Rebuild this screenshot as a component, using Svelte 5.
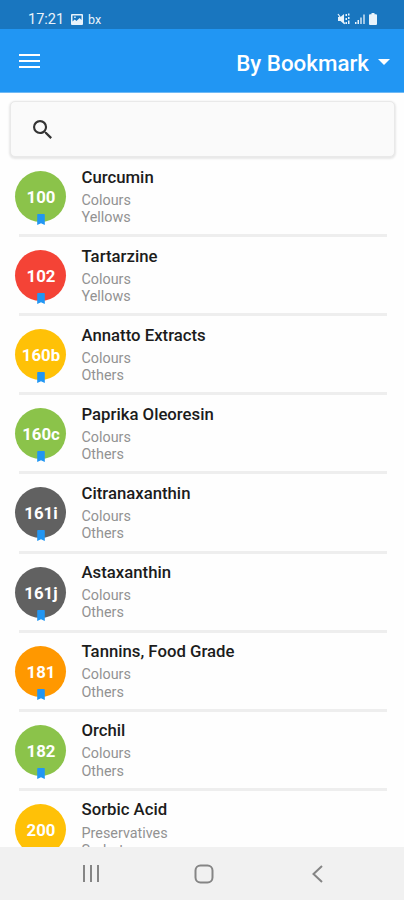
<script>
  const items = [
    { code: '100', name: 'Curcumin', group: 'Colours', kind: 'Yellows', color: '#8bc34a' },
    { code: '102', name: 'Tartarzine', group: 'Colours', kind: 'Yellows', color: '#f44336' },
    { code: '160b', name: 'Annatto Extracts', group: 'Colours', kind: 'Others', color: '#ffc107' },
    { code: '160c', name: 'Paprika Oleoresin', group: 'Colours', kind: 'Others', color: '#8bc34a' },
    { code: '161i', name: 'Citranaxanthin', group: 'Colours', kind: 'Others', color: '#616161' },
    { code: '161j', name: 'Astaxanthin', group: 'Colours', kind: 'Others', color: '#616161' },
    { code: '181', name: 'Tannins, Food Grade', group: 'Colours', kind: 'Others', color: '#ff9800' },
    { code: '182', name: 'Orchil', group: 'Colours', kind: 'Others', color: '#8bc34a' },
    { code: '200', name: 'Sorbic Acid', group: 'Preservatives', kind: 'Sorbates', color: '#ffc107' }
  ];
</script>

<div class="screen">
  <div class="status">
    <span class="time">17:21</span>
    <svg class="photo" width="12" height="11" viewBox="0 0 12 11">
      <path fill="#e9f3fb" fill-rule="evenodd" d="M1 0h10a1 1 0 0 1 1 1v9a1 1 0 0 1-1 1H1a1 1 0 0 1-1-1V1a1 1 0 0 1 1-1zM1.5 1.5v6l2.2-2 1.8 1.4L8.6 4l1.9 2V1.500z M3.200 2.500h1.500v1.500h-1.500z" />
    </svg>
    <span class="carrier">bx</span>
    <svg class="signals" width="42" height="14" viewBox="0 0 42 14">
      <g fill="#e9f3fb">
        <path d="M1 5h2.500L7 2v10L3.500 9H1z" />
        <path d="M8.500 2h1.500v2H8.500zM8.500 6h1.500v2H8.500zM8.500 10h1.500v2H8.500zM11 1.500h1.500v2H11zM11 5h1.500v2H11zM11 8.500h1.500v3.500H11z" />
        <path d="M18 10h1.500v2H18zM20.500 8h1.500v4h-1.500z" />
        <path opacity=".65" d="M23 5.500h2V12h-2zM26 2.500h2V12h-2z" />
        <path d="M34.500 1h3v1.200H39a1 1 0 0 1 1 1V12a1 1 0 0 1-1 1h-6a1 1 0 0 1-1-1V3.200a1 1 0 0 1 1-1h1.500z" />
      </g>
      <path d="M1 2l7 10" stroke="#e9f3fb" stroke-width="1.200" />
    </svg>
  </div>

  <header>
    <svg width="21" height="16" viewBox="0 0 21 16">
      <path d="M0 2h21M0 8h21M0 14h21" stroke="#fff" stroke-width="2.200" />
    </svg>
    <button class="sort">
      <span>By Bookmark</span>
      <svg width="12" height="6" viewBox="0 0 12 6"><path d="M0 0h12L6 6z" fill="#fff" /></svg>
    </button>
  </header>

  <main>
    <div class="search">
      <svg width="19" height="19" viewBox="3 3 17.500 17.500">
        <path fill="#333" d="M15.500 14h-.79l-.28-.27A6.471 6.471 0 0 0 16 9.500 6.500 6.500 0 1 0 9.500 16c1.610 0 3.090-.59 4.230-1.570l.27.28v.79l5 4.990L20.490 19l-4.990-5zm-6 0C7.010 14 5 11.990 5 9.500S7.010 5 9.500 5 14 7.010 14 9.500 11.990 14 9.500 14z" />
      </svg>
    </div>

    <ul>
      {#each items as item}
        <li>
          <div class="badge" style:background={item.color}>
            {item.code}
            <svg class="mark" width="8" height="11" viewBox="0 0 8 11">
              <path d="M1 0h6a.8.8 0 0 1 .8.800V11L4 9.200.2 11V.8A.8.800 0 0 1 1 0z" fill="#2196f3" />
            </svg>
          </div>
          <div class="info">
            <div class="name">{item.name}</div>
            <div class="sub">{item.group}</div>
            <div class="sub">{item.kind}</div>
          </div>
        </li>
      {/each}
    </ul>
  </main>

  <nav>
    <svg width="18" height="18" viewBox="0 0 18 18"><path d="M2 0v17M9 0v17M16 0v17" stroke="#858585" stroke-width="2" /></svg>
    <svg width="20" height="20" viewBox="0 0 20 20"><rect x="1.500" y="1.500" width="17" height="17" rx="5" fill="none" stroke="#858585" stroke-width="2" /></svg>
    <svg width="18" height="18" viewBox="0 0 18 18"><path d="M14 1L5.500 9l8.500 8" fill="none" stroke="#858585" stroke-width="2" /></svg>
  </nav>
</div>

<style>
  .screen {
    width: 404px;
    height: 900px;
    display: flex;
    flex-direction: column;
    overflow: hidden;
    background: #fefefe;
    font-family: Roboto, "Liberation Sans", sans-serif;
  }
  .status {
    flex: none;
    height: 29px;
    box-sizing: border-box;
    padding: 9px 25px 0 28px;
    display: flex;
    align-items: center;
    background: #1976bf;
    color: #e9f3fb;
  }
  .time {
    width: 43px;
    margin-top: 1px;
    font-size: 14.500px;
    line-height: 20px;
  }
  .carrier {
    margin-left: 5px;
    font-size: 12.500px;
  }
  .signals {
    margin-left: auto;
  }
  header {
    flex: none;
    height: 64px;
    box-sizing: border-box;
    padding: 0 14px 0 19px;
    display: flex;
    align-items: center;
    justify-content: space-between;
    background: #2196f3;
    border-bottom: 1px solid #6fb9f5;
  }
  .sort {
    display: flex;
    align-items: center;
    gap: 9px;
    padding: 4px 0 0;
    border: 0;
    background: none;
    color: #fff;
    font: 500 22.350px/26px Roboto, sans-serif;
  }
  .sort svg {
    margin-top: -2px;
  }
  main {
    flex: 1;
    min-height: 0;
    overflow: hidden;
  }
  .search {
    height: 56px;
    margin: 8px 9px 0 10px;
    box-sizing: border-box;
    padding-left: 22px;
    display: flex;
    align-items: center;
    background: #fafafa;
    border: 1px solid #e9e9e9;
    border-radius: 5px;
    box-shadow: 0 1px 2px 1px #e8e8e8;
  }
  ul {
    list-style: none;
    margin: 0;
    padding: 1.100px 17px 0 15px;
  }
  li {
    height: 79.100px;
    box-sizing: border-box;
    display: flex;
    padding-top: 13px;
    background: linear-gradient(#eee, #eee) 4px 100% / 368px 3px no-repeat;
  }
  .badge {
    position: relative;
    flex: none;
    width: 51px;
    height: 51px;
    border-radius: 50%;
    display: flex;
    align-items: center;
    justify-content: center;
    color: #fff;
    font-size: 16.800px;
    font-weight: 700;
    padding: 1px 0 0 1px;
    box-sizing: border-box;
  }
  .mark {
    position: absolute;
    left: 22px;
    bottom: -3px;
  }
  .info {
    margin: -3.500px 0 0 15.500px;
  }
  .name {
    color: #1c1c1c;
    font-size: 16.740px;
    font-weight: 500;
    line-height: 19.500px;
    margin-bottom: 4.700px;
  }
  .sub {
    color: #929292;
    font-size: 14.350px;
    line-height: 17.200px;
  }
  nav {
    flex: none;
    height: 53px;
    box-sizing: border-box;
    padding: 0 78px 0 82px;
    display: flex;
    align-items: center;
    justify-content: space-between;
    background: #f1f1f1;
  }
</style>
